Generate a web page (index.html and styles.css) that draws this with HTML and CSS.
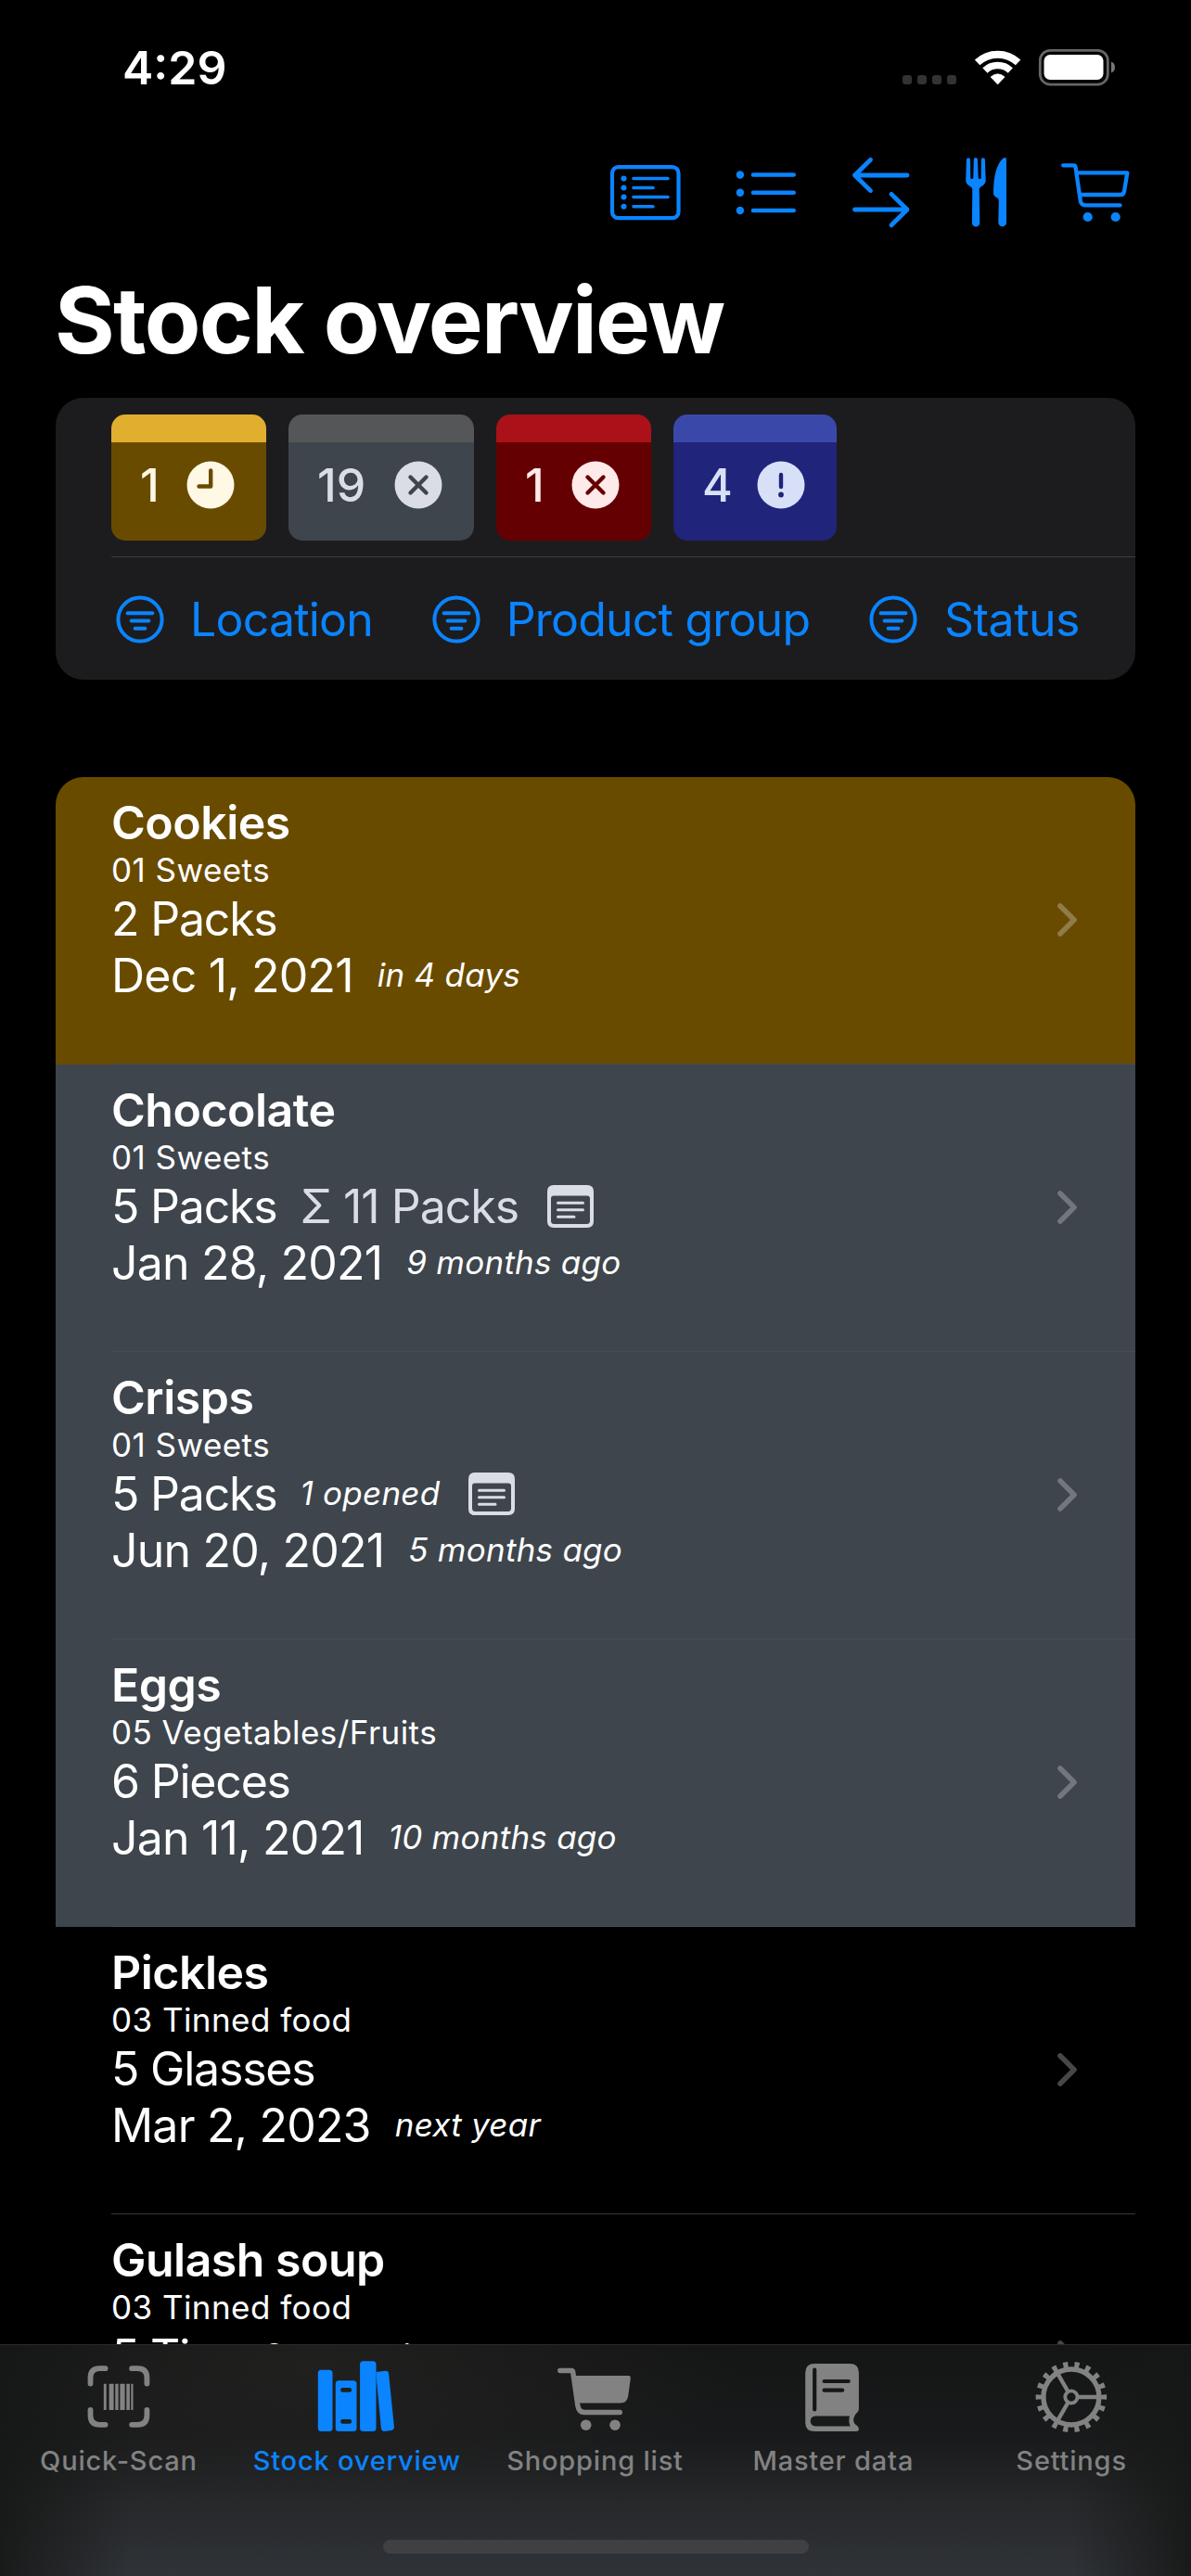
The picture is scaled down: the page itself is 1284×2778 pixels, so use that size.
FILE: index.html
```html
<!DOCTYPE html>
<html lang="en">
<head>
<meta charset="utf-8">
<title>Stock overview</title>
<link rel="stylesheet" href="styles.css">
</head>
<body>
<svg class="defs" width="0" height="0" aria-hidden="true">
  <symbol id="chevron" viewBox="1139 973 24 38"><path d="M1143 977l15 15-15 15" fill="none" stroke="currentColor" stroke-width="5.6" stroke-linecap="round" stroke-linejoin="round"/></symbol>
  <symbol id="filter" viewBox="0 0 52 52"><g fill="none" stroke="currentColor" stroke-width="4" stroke-linecap="round"><circle cx="26" cy="26" r="23.6"/><path d="M12.6 19.2h26.800M16.600 27.500h18.800M20.600 35.700h10.800"/></g></symbol>
  <symbol id="note" viewBox="0 0 50 46"><path fill="currentColor" fill-rule="evenodd" d="M7 0H43Q50 0 50 7V39Q50 46 43 46H7Q0 46 0 39V7Q0 0 7 0ZM7 11.500Q4 11.500 4 14.500V38.500Q4 42 7.500 42H42.500Q46 42 46 38.500V14.500Q46 11.500 43 11.500Z"/><path d="M11.500 19.300h27M11.500 26.700h27M11.500 34.300h17.500" fill="none" stroke="currentColor" stroke-width="3" stroke-linecap="round"/></symbol>
</svg>
<div class="screen">
  <header class="status">
    <span class="time">4:29</span>
    <svg width="232" height="44" viewBox="972 50 232 44">
      <g fill="#333"><rect x="973" y="81" width="10" height="10" rx="3"/><rect x="989" y="81" width="10" height="10" rx="3"/><rect x="1005" y="81" width="10" height="10" rx="3"/><rect x="1021" y="81" width="10" height="10" rx="3"/></g>
      <g fill="none" stroke="#fff"><path stroke-width="8" d="M1053.600 67.400A32 32 0 0 1 1097.600 67.400"/><path stroke-width="7.600" d="M1061.900 76A20 20 0 0 1 1089.300 76"/></g>
      <path fill="#fff" d="M1075.600 91L1068 83Q1075.600 76.500 1083.200 83Z" stroke="#fff" stroke-width=".6"/>
      <rect x="1121.300" y="54.300" width="73" height="36.800" rx="11" fill="none" stroke="#666" stroke-width="2.800"/>
      <rect x="1125.500" y="59" width="64" height="27" rx="6.500" fill="#fff"/>
      <path fill="#777" d="M1198 66.500Q1202 68 1202 72.500T1198 78.500Z"/>
    </svg>
  </header>
  <nav class="toolbar">
    <svg width="92" height="90" viewBox="650 162 92 90"><g fill="none" stroke="currentColor" stroke-linecap="round"><rect x="660" y="180.200" width="71.500" height="55" rx="6.500" stroke-width="4.200"/><path stroke-width="3.600" d="M683 192.500h37M683 202.500h21M683 212.500h37M683 222.700h21"/></g><g fill="currentColor"><circle cx="672.500" cy="192.500" r="3"/><circle cx="672.500" cy="202.500" r="3"/><circle cx="672.500" cy="212.500" r="3"/><circle cx="672.500" cy="222.700" r="3"/></g></svg>
    <svg width="112" height="90" viewBox="772 162 112 90"><path fill="none" stroke="currentColor" stroke-linecap="round" stroke-width="4.600" d="M812 188.500h43.700M812 207.800h43.700M812 227h43.700"/><g fill="currentColor"><circle cx="797.900" cy="188.500" r="4.200"/><circle cx="797.900" cy="207.800" r="4.200"/><circle cx="797.900" cy="227" r="4.200"/></g></svg>
    <svg width="72" height="90" viewBox="914 162 72 90"><path fill="none" stroke="currentColor" stroke-width="4.800" stroke-linecap="round" stroke-linejoin="round" d="M978 189H921.500M938.500 172.300L921.500 189L938.500 205.600M921.500 226H978M961 209.400L978 226L961 242.800"/></svg>
    <svg width="94" height="90" viewBox="1016 162 94 90" fill="currentColor"><path d="M1041.900 172.200a2 2 0 0 1 4.100 0L1046.300 191.500a1.500 1.500 0 0 0 3 0L1049.800 172.200a2.100 2.100 0 0 1 4.200 0L1054.700 191.500a1.500 1.500 0 0 0 3 0L1057.800 172.200a2 2 0 0 1 4.100 0L1062.700 194.500Q1062.600 198.500 1058.500 200.700Q1055.700 202 1055.700 204L1056.300 240.200a4.200 4.200 0 0 1-8.400 0L1048.300 204Q1048.300 202 1045.500 200.700Q1041.300 198.500 1041.200 194.500Z"/><path d="M1085 172V240a4.300 4.300 0 0 1-8.700 0L1076.800 216Q1076.700 214 1074.500 213Q1071 211.500 1071 208Q1071 181 1081 171Q1084.600 168.500 1085 172Z"/></svg>
    <svg width="82" height="90" viewBox="1140 162 82 90"><path fill="none" stroke="currentColor" stroke-width="4.300" stroke-linecap="round" stroke-linejoin="round" d="M1146.200 178.300H1157.500Q1159.200 178.300 1159.500 180L1164.800 216.500Q1165.500 221.300 1170.500 221.300H1207.600M1161 186.300H1215.300L1212 206.500Q1211.300 210 1208 210H1164"/><g fill="currentColor"><circle cx="1172.700" cy="234" r="5.100"/><circle cx="1202.700" cy="234" r="5.100"/></g></svg>
  </nav>
  <h1>Stock overview</h1>

  <section class="card">
    <div class="tiles">
      <div class="tile soon"><b>1</b><svg width="52" height="52" viewBox="0 0 52 52"><circle cx="26" cy="26" r="25.500" fill="currentColor"/><path class="mark" d="M26.200 10.500V27.500H13.500"/></svg></div>
      <div class="tile expired"><b>19</b><svg width="52" height="52" viewBox="0 0 52 52"><circle cx="26" cy="26" r="25.500" fill="currentColor"/><path class="mark" d="M17.500 17.500l17 17M34.500 17.500l-17 17"/></svg></div>
      <div class="tile overdue"><b>1</b><svg width="52" height="52" viewBox="0 0 52 52"><circle cx="26" cy="26" r="25.500" fill="currentColor"/><path class="mark" d="M17.500 17.500l17 17M34.500 17.500l-17 17"/></svg></div>
      <div class="tile missing"><b>4</b><svg width="52" height="52" viewBox="0 0 52 52"><circle cx="26" cy="26" r="25.500" fill="currentColor"/><path class="mark" d="M26 15v13"/><circle class="dot" cx="26" cy="36.500" r="2.900"/></svg></div>
    </div>
    <div class="filters">
      <div class="filter"><svg width="52" height="52"><use href="#filter"/></svg><span>Location</span></div>
      <div class="filter"><svg width="52" height="52"><use href="#filter"/></svg><span>Product group</span></div>
      <div class="filter"><svg width="52" height="52"><use href="#filter"/></svg><span>Status</span></div>
    </div>
  </section>

  <main class="list">
    <article class="row gold"><div class="body"><div class="info">
      <h2>Cookies</h2><p class="group">01 Sweets</p>
      <p class="line amount"><span>2 Packs</span></p>
      <p class="line"><span>Dec 1, 2021</span><i>in 4 days</i></p>
    </div><svg class="chev" width="24" height="38"><use href="#chevron"/></svg></div></article>
    <article class="row gray"><div class="body"><div class="info">
      <h2>Chocolate</h2><p class="group">01 Sweets</p>
      <p class="line amount"><span>5 Packs</span><span class="sum">Σ 11 Packs</span><svg class="note" width="50" height="46"><use href="#note"/></svg></p>
      <p class="line"><span>Jan 28, 2021</span><i>9 months ago</i></p>
    </div><svg class="chev" width="24" height="38"><use href="#chevron"/></svg></div></article>
    <article class="row gray"><div class="body"><div class="info">
      <h2>Crisps</h2><p class="group">01 Sweets</p>
      <p class="line amount"><span>5 Packs</span><i>1 opened</i><svg class="note" width="50" height="46"><use href="#note"/></svg></p>
      <p class="line"><span>Jun 20, 2021</span><i>5 months ago</i></p>
    </div><svg class="chev" width="24" height="38"><use href="#chevron"/></svg></div></article>
    <article class="row gray"><div class="body"><div class="info">
      <h2>Eggs</h2><p class="group">05 Vegetables/Fruits</p>
      <p class="line amount"><span>6 Pieces</span></p>
      <p class="line"><span>Jan 11, 2021</span><i>10 months ago</i></p>
    </div><svg class="chev" width="24" height="38"><use href="#chevron"/></svg></div></article>
    <article class="row"><div class="body"><div class="info">
      <h2>Pickles</h2><p class="group">03 Tinned food</p>
      <p class="line amount"><span>5 Glasses</span></p>
      <p class="line"><span>Mar 2, 2023</span><i>next year</i></p>
    </div><svg class="chev" width="24" height="38"><use href="#chevron"/></svg></div></article>
    <article class="row"><div class="body"><div class="info">
      <h2>Gulash soup</h2><p class="group">03 Tinned food</p>
      <p class="line amount"><span>5 Tins</span><i>2 opened</i></p>
    </div><svg class="chev" width="24" height="38"><use href="#chevron"/></svg></div></article>
  </main>

  <footer class="tabbar">
    <div class="tabs">
      <div class="tab"><svg width="80" height="90" viewBox="88.400 2540 80 90"><path fill="none" stroke="currentColor" stroke-width="5.800" stroke-linecap="round" d="M114 2554.200H108Q97.900 2554.200 97.900 2564.300V2570.500M142.500 2554.200H148.700Q158.800 2554.200 158.800 2564.300V2570.500M158.800 2599V2604.700Q158.800 2614.800 148.700 2614.800H142.500M114 2614.800H108Q97.900 2614.800 97.900 2604.700V2599"/><path fill="currentColor" d="M112.200 2570.700h2.900v28.300h-2.900zM118 2570.700h5v28.300h-5zM124.700 2570.700h3.300v28.300h-3.300zM129.800 2570.700h5.200v28.300h-5.200zM136.700 2570.700h3.600v28.300h-3.600zM141.700 2570.700h2.200v28.300h-2.200z"/></svg><span>Quick-Scan</span></div>
      <div class="tab active"><svg width="100" height="90" viewBox="335.200 2540 100 90" fill="currentColor"><rect x="343" y="2555.700" width="15.700" height="66.300" rx="3.500"/><path fill-rule="evenodd" d="M365.500 2567.300H381.200Q384.700 2567.300 384.700 2570.800V2618.500Q384.700 2622 381.200 2622H365.500Q362 2622 362 2618.500V2570.800Q362 2567.300 365.500 2567.300ZM369.600 2575.100a2.300 2.300 0 0 0 0 4.600h7.400a2.300 2.300 0 0 0 0-4.600ZM369.600 2609.100a2.300 2.300 0 0 0 0 4.600h7.400a2.300 2.300 0 0 0 0-4.600Z"/><rect x="388.300" y="2546.300" width="17.400" height="75.700" rx="3.500"/><path d="M405.700 2558L415.500 2556.700Q418.900 2556.500 419.300 2560L425.100 2617Q425.300 2620.200 422 2620.900L414.500 2621.900Q411.500 2622 411.100 2618.800L405.700 2562Z"/></svg><span>Stock overview</span></div>
      <div class="tab"><svg width="90" height="90" viewBox="597 2540 90 90"><path fill="currentColor" d="M620 2562H677.500Q680.200 2562.200 679.800 2565L677.200 2584Q676 2591.500 669 2591.500H624Z"/><path fill="none" stroke="currentColor" stroke-width="5.400" stroke-linecap="round" stroke-linejoin="round" d="M603.800 2556.500H616Q617.400 2556.500 617.700 2558L622.800 2594Q624 2601.500 630 2601.500H668.300"/><g fill="currentColor"><circle cx="631.700" cy="2615.200" r="5.800"/><circle cx="663" cy="2615.200" r="5.800"/></g></svg><span>Shopping list</span></div>
      <div class="tab"><svg width="90" height="90" viewBox="853.800 2540 90 90"><path fill="currentColor" fill-rule="evenodd" d="M878 2549H916Q925.700 2549 925.700 2558.700V2598Q925.700 2600 924 2601.600Q920 2605.500 920 2609.700T924 2616Q925.700 2617.500 925.700 2619.500Q925.700 2622 923 2622H878Q868 2622 868 2612.500V2558.700Q868 2549 878 2549ZM879 2605.600Q873.500 2606 873.500 2611T879 2616.400H916.400Q914.200 2611 915.800 2605.600Z"/><path class="cut" d="M878 2555.500V2598.500M888.400 2568H914.500M888.400 2577.700H908"/></svg><span>Master data</span></div>
      <div class="tab"><svg width="90" height="90" viewBox="1110.600 2540 90 90" fill="none" stroke="currentColor"><circle cx="1154.500" cy="2585" r="30" stroke-width="5.400"/><circle cx="1154.500" cy="2585" r="35" stroke-width="6.500" pathLength="180" stroke-dasharray="4.200 5.800" stroke-dashoffset="2.100"/><circle cx="1154.500" cy="2585" r="6.600" stroke-width="3.900"/><path stroke-width="4.400" d="M1162 2585H1184M1150.700 2578.500L1139.800 2559.600M1150.700 2591.500L1139.800 2610.400"/></svg><span>Settings</span></div>
    </div>
    <div class="home"></div>
  </footer>
</div>
</body>
</html>
```
FILE: styles.css
```css
* { box-sizing: border-box; }
body { margin: 0; background: #000; color: #fff; font-family: Inter, "Liberation Sans", sans-serif; }
h1, h2, p { margin: 0; }
svg { display: block; flex: none; }
.defs { position: absolute; }

.screen { display: flex; flex-direction: column; width: 1284px; height: 2778px; overflow: hidden; }

.status { display: flex; justify-content: space-between; height: 162px; padding: 43px 80px 0 132px; }
.status svg { margin-top: 7px; }
.time { font-size: 50px; line-height: 60px; font-weight: 600; letter-spacing: 0; }

.toolbar { display: flex; justify-content: flex-end; gap: 30px; height: 123px; padding-right: 62px; color: #0a84ff; }
h1 { height: 144px; padding-left: 59px; font-size: 99px; line-height: 120px; font-weight: 700; letter-spacing: -1.7px; }

.card { flex: none; width: 1164px; height: 304px; margin: 0 auto; background: #1c1c1e; border-radius: 30px; }
.tiles { display: flex; gap: 24px; height: 172px; margin-left: 60px; padding-top: 18px; border-bottom: 1px solid #3d3d40; }
.tile { display: flex; align-items: center; justify-content: space-between; width: 167px; height: 136px; padding: 0 34px 15px 31px; border-top: 30px solid; border-radius: 15px; }
.tile b { font-size: 50px; line-height: 60px; font-weight: 550; letter-spacing: 0; }
.tile .mark { fill: none; stroke-width: 4.400px; stroke-linecap: round; stroke-linejoin: round; }
.soon { background: #694b00; border-color: #e2ae30; color: #fef8e4; }
.soon .mark { stroke: #694b00; }
.expired { width: 200px; background: #3e454c; border-color: #555657; color: #dadde6; }
.expired .mark { stroke: #3e454c; }
.overdue { background: #650002; border-color: #ab1118; color: #feeae8; }
.overdue .mark { stroke: #650002; }
.missing { width: 176px; background: #20247b; border-color: #3a49a9; color: #d8e0f8; }
.missing .mark { stroke: #20247b; }
.missing .dot { fill: #20247b; }

.filters { display: flex; align-items: center; justify-content: space-between; height: 132px; padding: 1px 60px 0 65px; color: #0a84ff; font-size: 50px; line-height: 60px; letter-spacing: -.8px; }
.filter { display: flex; align-items: center; gap: 28px; }
.filter:last-child { gap: 29px; letter-spacing: -.5px; }

.list { flex: 1; min-height: 0; width: 1164px; margin: 105px auto 0; border-radius: 30px 30px 0 0; overflow: hidden; }
.row { height: 310px; padding-left: 60px; }
.gold { background: #694b00; }
.gray { background: #3e454c; }
.body { display: flex; justify-content: space-between; height: 310px; padding: 19px 61px 0 0; border-bottom: 1px solid #38383b; }
.gold .body, .gray .body { border-color: #474d53; }
.chev { margin-top: 116px; color: rgba(235, 235, 245, .3); }
h2 { font-size: 50px; line-height: 60px; font-weight: 600; letter-spacing: -.5px; }
.group { margin-bottom: 1px; font-size: 35px; line-height: 43px; letter-spacing: .45px; }
.line { display: flex; align-items: center; gap: 26px; height: 60px; margin-bottom: 1px; font-size: 50px; line-height: 60px; letter-spacing: -.8px; white-space: nowrap; }
.amount { gap: 25px; letter-spacing: -1.2px; }
.line i { padding-bottom: 3px; font-size: 35px; letter-spacing: .25px; }
.sum { color: #dadde6; letter-spacing: -1px; }
.note { margin-left: 6px; color: #dadde6; }

.tabbar {
  flex: none; display: flex; flex-direction: column; align-items: center; height: 250px; border-top: 1px solid #2b2b2c;
  background:
    linear-gradient(90deg, rgba(22, 24, 23, .9), rgba(22, 24, 23, 0) 11%, rgba(22, 24, 23, 0) 90%, rgba(22, 24, 23, .9)),
    radial-gradient(ellipse 460px 160px at 340px 20px, rgba(44, 42, 40, .5), rgba(44, 42, 40, 0)),
    linear-gradient(#141515, #191a1b 40%, #26282a 68%, #303338);
}
.tabs { display: flex; width: 100%; height: 210px; }
.tab { flex: 1; display: flex; flex-direction: column; align-items: center; padding-top: 11px; color: #828282; font-size: 29px; font-weight: 500; line-height: 36px; letter-spacing: .8px; white-space: nowrap; }
.tab span { margin: 6px 1px 0 0; }
.tab.active { color: #0a84ff; }
.cut { fill: none; stroke: #161717; stroke-width: 4.200px; stroke-linecap: round; }
.home { width: 459px; height: 15px; border-radius: 8px; background: #404042; }
```
